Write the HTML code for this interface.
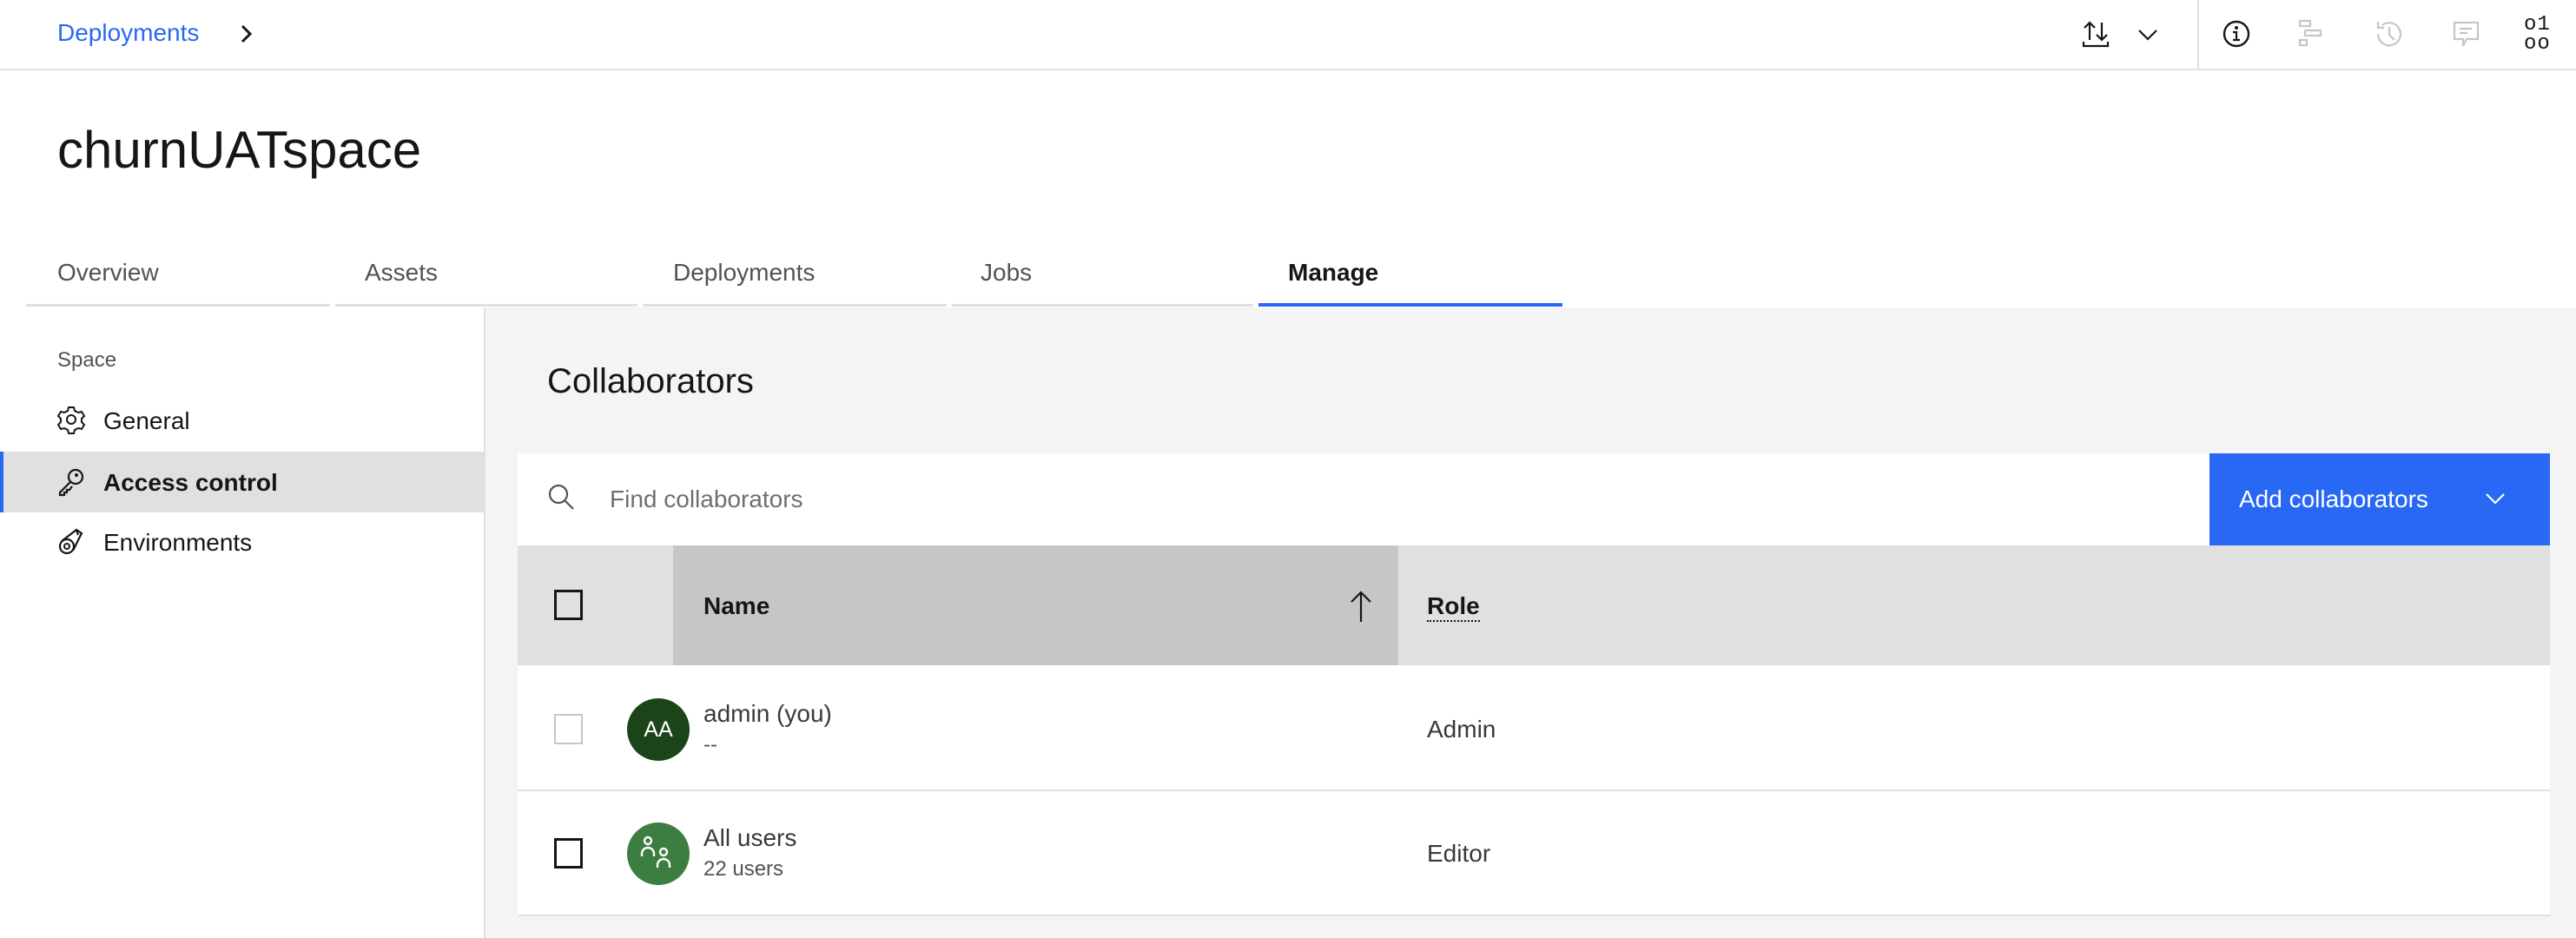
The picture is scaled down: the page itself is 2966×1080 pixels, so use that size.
<!DOCTYPE html>
<html><head><meta charset="utf-8"><style>
*{margin:0;padding:0;box-sizing:border-box}
body{width:2966px;height:1080px;overflow:hidden;background:#fff;font-family:"Liberation Sans",sans-serif;color:#161616;position:relative}
.a{position:absolute;white-space:nowrap}
svg{position:absolute;overflow:visible}
</style></head><body>
<!-- top bar -->
<div class="a" style="left:0;top:79px;width:2966px;height:2px;background:#e0e0e0"></div>
<div class="a" style="left:66px;top:22px;font-size:28px;color:#2968f5">Deployments</div>
<svg style="left:274px;top:27px" width="20" height="24" viewBox="0 0 20 24"><path d="M5 3l9 9-9 9" fill="none" stroke="#161616" stroke-width="3"/></svg>
<div class="a" style="left:2530px;top:0;width:2px;height:80px;background:#e0e0e0"></div>
<svg style="left:2398px;top:24px" width="34" height="30" viewBox="0 0 34 30"><path d="M8 2v20M2 8l6-6 6 6M22 2v20M16 16l6 6 6-6M1 24v5h28v-5" fill="none" stroke="#161616" stroke-width="2.2"/></svg>
<svg style="left:2460px;top:32px" width="26" height="16" viewBox="0 0 26 16"><path d="M3 3l10 10 10-10" fill="none" stroke="#161616" stroke-width="2.2"/></svg>
<svg style="left:2558px;top:22px" width="34" height="34" viewBox="0 0 34 34"><circle cx="17" cy="17" r="14" fill="none" stroke="#161616" stroke-width="2.4"/><circle cx="17" cy="10" r="2" fill="#161616"/><path d="M13 15h4v9M13 24h8" fill="none" stroke="#161616" stroke-width="2.2"/></svg>
<svg style="left:2646px;top:22px" width="36" height="34" viewBox="0 0 36 34"><g fill="none" stroke="#c6c6c6" stroke-width="2.2"><rect x="2" y="2" width="12" height="6"/><rect x="8" y="13" width="18" height="6"/><rect x="2" y="24" width="8" height="6"/></g></svg>
<svg style="left:2734px;top:22px" width="34" height="34" viewBox="0 0 34 34"><path d="M4 17a13 13 0 1 0 5-10M4 3v7h7M17 9v9l6 6" fill="none" stroke="#c6c6c6" stroke-width="2.2"/></svg>
<svg style="left:2823px;top:23px" width="34" height="34" viewBox="0 0 34 34"><path d="M3 3h27v19H17l-4 8v-8H3z M9 10h14M9 15h9" fill="none" stroke="#c6c6c6" stroke-width="2.2"/></svg>
<div class="a" style="left:2906px;top:18px;font-size:24px;line-height:22px;font-family:'Liberation Mono',monospace;letter-spacing:1px">o1<br>oo</div>
<!-- title -->
<div class="a" style="left:66px;top:138px;font-size:60px">churnUATspace</div>
<!-- tabs -->
<div class="a" style="left:30px;top:350px;width:1769px;height:3px;background:#e0e0e0"></div>
<div class="a" style="left:380px;top:348px;width:6px;height:6px;background:#fff"></div>
<div class="a" style="left:734px;top:348px;width:6px;height:6px;background:#fff"></div>
<div class="a" style="left:1090px;top:348px;width:6px;height:6px;background:#fff"></div>
<div class="a" style="left:1443px;top:348px;width:6px;height:6px;background:#fff"></div>
<div class="a" style="left:1449px;top:349px;width:350px;height:4px;background:#2968f5"></div>
<div class="a" style="left:66px;top:298px;font-size:28px;color:#525252">Overview</div>
<div class="a" style="left:420px;top:298px;font-size:28px;color:#525252">Assets</div>
<div class="a" style="left:775px;top:298px;font-size:28px;color:#525252">Deployments</div>
<div class="a" style="left:1129px;top:298px;font-size:28px;color:#525252">Jobs</div>
<div class="a" style="left:1483px;top:298px;font-size:28px;font-weight:bold">Manage</div>
<!-- main bg -->
<div class="a" style="left:0;top:354px;width:2966px;height:726px;background:#f4f4f4"></div>
<div class="a" style="left:0;top:354px;width:559px;height:726px;background:#fff;border-right:2px solid #e0e0e0"></div>
<div class="a" style="left:66px;top:401px;font-size:24px;color:#525252">Space</div>
<svg style="left:66px;top:467px" width="32" height="32" viewBox="0 0 32 32"><path d="M13 2h6l1 4 4 2 4-1 3 5-3 3v4l3 3-3 5-4-1-4 2-1 4h-6l-1-4-4-2-4 1-3-5 3-3v-4l-3-3 3-5 4 1 4-2z" fill="none" stroke="#161616" stroke-width="2"/><circle cx="16" cy="16" r="5" fill="none" stroke="#161616" stroke-width="2"/></svg>
<div class="a" style="left:119px;top:469px;font-size:28px">General</div>
<div class="a" style="left:0;top:520px;width:557px;height:70px;background:#e0e0e0"></div>
<div class="a" style="left:0;top:520px;width:4px;height:70px;background:#2968f5"></div>
<svg style="left:66px;top:538px" width="32" height="34" viewBox="0 0 32 34"><circle cx="21" cy="11" r="8" fill="none" stroke="#161616" stroke-width="2.2"/><circle cx="22" cy="9" r="2" fill="#161616"/><path d="M15 17L3 29v3h5v-3h3v-3h3l3-4" fill="none" stroke="#161616" stroke-width="2.2"/></svg>
<div class="a" style="left:119px;top:540px;font-size:28px;font-weight:bold">Access control</div>
<svg style="left:66px;top:607px" width="32" height="34" viewBox="0 0 32 34"><circle cx="11" cy="22" r="8" fill="none" stroke="#161616" stroke-width="2.2"/><circle cx="11" cy="22" r="3" fill="none" stroke="#161616" stroke-width="2"/><path d="M5 16L22 3l6 4-10 20M22 3l2 6" fill="none" stroke="#161616" stroke-width="2.2"/></svg>
<div class="a" style="left:119px;top:609px;font-size:28px">Environments</div>
<!-- content -->
<div class="a" style="left:630px;top:417px;font-size:40px">Collaborators</div>
<div class="a" style="left:596px;top:522px;width:1948px;height:106px;background:#fff"></div>
<svg style="left:630px;top:556px" width="34" height="34" viewBox="0 0 34 34"><circle cx="13" cy="13" r="10" fill="none" stroke="#525252" stroke-width="2.2"/><path d="M20 20l10 10" stroke="#525252" stroke-width="2.2"/></svg>
<div class="a" style="left:702px;top:559px;font-size:28px;color:#6f6f6f">Find collaborators</div>
<div class="a" style="left:2544px;top:522px;width:392px;height:106px;background:#2968f5"></div>
<div class="a" style="left:2578px;top:559px;font-size:28px;color:#fff">Add collaborators</div>
<svg style="left:2860px;top:566px" width="26" height="16" viewBox="0 0 26 16"><path d="M3 3l10 10 10-10" fill="none" stroke="#fff" stroke-width="2.2"/></svg>
<div class="a" style="left:596px;top:628px;width:2340px;height:138px;background:#e0e0e0"></div>
<div class="a" style="left:775px;top:628px;width:835px;height:138px;background:#c6c6c6"></div>
<div class="a" style="left:638px;top:679px;width:33px;height:35px;border:3px solid #161616"></div>
<div class="a" style="left:810px;top:682px;font-size:28px;font-weight:bold">Name</div>
<svg style="left:1552px;top:680px" width="30" height="36" viewBox="0 0 30 36"><path d="M15 2v34M4 13L15 2l11 11" fill="none" stroke="#161616" stroke-width="2.2"/></svg>
<div class="a" style="left:1643px;top:682px;font-size:28px;font-weight:bold;border-bottom:2px dotted #161616;line-height:32px">Role</div>
<div class="a" style="left:596px;top:766px;width:2340px;height:288px;background:#fff"></div>
<div class="a" style="left:596px;top:909px;width:2340px;height:2px;background:#e0e0e0"></div>
<div class="a" style="left:596px;top:1053px;width:2340px;height:2px;background:#e0e0e0"></div>
<div class="a" style="left:638px;top:822px;width:33px;height:35px;border:2px solid #c6c6c6"></div>
<div class="a" style="left:722px;top:804px;width:72px;height:72px;border-radius:50%;background:#1c4419;color:#fff;font-size:25px;text-align:center;line-height:72px">AA</div>
<div class="a" style="left:810px;top:806px;font-size:28px;color:#393939">admin (you)</div>
<div class="a" style="left:810px;top:844px;font-size:24px;color:#525252">--</div>
<div class="a" style="left:1643px;top:824px;font-size:28px;color:#393939">Admin</div>
<div class="a" style="left:638px;top:965px;width:33px;height:35px;border:3px solid #161616"></div>
<div class="a" style="left:722px;top:947px;width:72px;height:72px;border-radius:50%;background:#3c7e41"></div>
<svg style="left:736px;top:960px" width="44" height="46" viewBox="0 0 44 46"><g fill="none" stroke="#fff" stroke-width="2.4"><circle cx="10" cy="8" r="4"/><path d="M3 26v-3a7 7 0 0 1 14 0v3"/><circle cx="28" cy="21" r="4"/><path d="M21 39v-3a7 7 0 0 1 14 0v3"/></g></svg>
<div class="a" style="left:810px;top:949px;font-size:28px;color:#393939">All users</div>
<div class="a" style="left:810px;top:987px;font-size:24px;color:#525252">22 users</div>
<div class="a" style="left:1643px;top:967px;font-size:28px;color:#393939">Editor</div>
</body></html>
